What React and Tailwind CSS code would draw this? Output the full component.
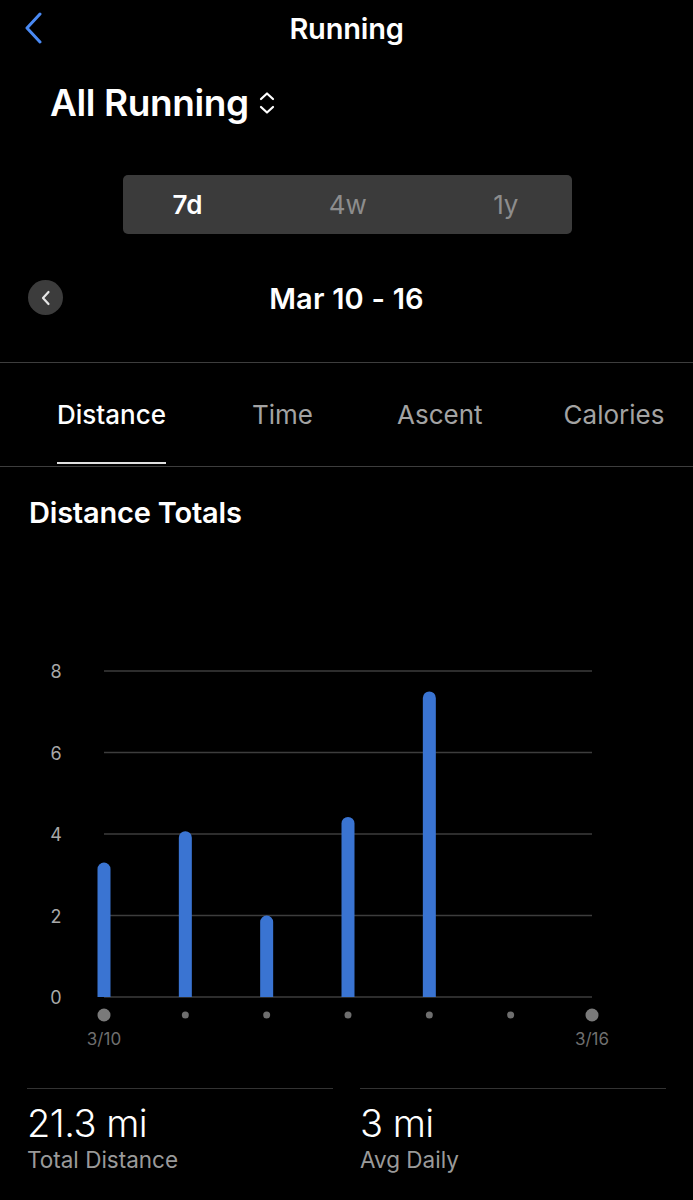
import React from "react";

const bars = [3.3, 4.07, 2.0, 4.42, 7.5, 0, 0];

function Chart() {
  const x0 = 104;
  const step = (592 - 104) / 6;
  const y0 = 358; // zero line inside svg (svg top = 640)
  const unit = 40.75;
  const grid = [0, 2, 4, 6, 8];
  return (
    <svg width="693" height="420" viewBox="0 0 693 420" className="block">
      {grid.map((g) => {
        const y = y0 - g * unit;
        return (
          <g key={g}>
            <line x1={x0} x2={592} y1={y} y2={y} stroke="#3d3d3d" strokeWidth="1.5" />
            <text x="56" y={y + 7} textAnchor="middle" fill="#a8a8a8" fontSize="18" fontFamily="Inter, 'Liberation Sans', sans-serif">
              {g}
            </text>
          </g>
        );
      })}
      {bars.map((v, i) => {
        const cx = x0 + i * step;
        const h = v * unit;
        return (
          <g key={i}>
            {v > 0 && (
              <path
                d={`M ${cx - 6.5} ${y0} L ${cx - 6.5} ${y0 - h + 6.5} A 6.5 6.5 0 0 1 ${cx + 6.5} ${y0 - h + 6.5} L ${cx + 6.5} ${y0} Z`}
                fill="#3a74d2"
              />
            )}
            <circle cx={cx} cy={376} r={i === 0 || i === 6 ? 6.5 : 3.5} fill={i === 0 || i === 6 ? "#7a7a7a" : "#6e6e6e"} />
          </g>
        );
      })}
      <text x={x0} y={406} textAnchor="middle" fill="#6f6f6f" fontSize="17" fontFamily="Inter, 'Liberation Sans', sans-serif">3/10</text>
      <text x={592} y={406} textAnchor="middle" fill="#6f6f6f" fontSize="17" fontFamily="Inter, 'Liberation Sans', sans-serif">3/16</text>
    </svg>
  );
}

export default function App() {
  return (
    <div className="w-[693px] h-[1200px] bg-black text-white overflow-hidden" style={{ fontFamily: "Inter, 'Liberation Sans', sans-serif" }}>
      {/* Header */}
      <div className="relative h-[58px] flex items-center justify-center">
        <svg className="absolute left-[23px] top-[12px]" width="22" height="32" viewBox="0 0 22 32">
          <path d="M17 2 L4 16 L17 30" fill="none" stroke="#4a8af4" strokeWidth="3" strokeLinecap="round" strokeLinejoin="round" />
        </svg>
        <div className="text-[29px] font-semibold tracking-[-0.2px]">Running</div>
      </div>

      {/* Title */}
      <div className="h-[92px] flex items-center pl-[50px] pb-[2px]">
        <div className="text-[37px] font-semibold tracking-[-0.4px]">All Running</div>
        <svg className="ml-[9px]" width="18" height="24" viewBox="0 0 18 24">
          <path d="M3 8 L9 2.5 L15 8" fill="none" stroke="white" strokeWidth="2.2" strokeLinecap="round" strokeLinejoin="round" />
          <path d="M3 16 L9 21.5 L15 16" fill="none" stroke="white" strokeWidth="2.2" strokeLinecap="round" strokeLinejoin="round" />
        </svg>
      </div>

      {/* Segmented */}
      <div className="pt-[25px] flex justify-center">
        <div className="w-[449px] h-[59px] ml-[1px] bg-[#3b3b3b] rounded-[5px] flex items-center justify-between pl-[50px] pr-[53px] text-[26px]">
          <span className="font-semibold text-white">7d</span>
          <span className="text-[#8d8d8d]">4w</span>
          <span className="text-[#8d8d8d]">1y</span>
        </div>
      </div>

      {/* Date row */}
      <div className="relative h-[128px] flex items-center justify-center pt-[1px]">
        <div className="absolute left-[28px] top-[46px] w-[35px] h-[35px] rounded-full bg-[#3c3c3c] flex items-center justify-center">
          <svg width="12" height="16" viewBox="0 0 12 16">
            <path d="M8.5 2 L3 8 L8.5 14" fill="none" stroke="#e5e5e5" strokeWidth="2.2" strokeLinecap="round" strokeLinejoin="round" />
          </svg>
        </div>
        <div className="text-[29px] font-semibold tracking-[0.2px]">Mar 10 - 16</div>
      </div>

      {/* Tabs */}
      <div className="border-t-[1.5px] border-b-[1.5px] border-[#3d3d3d] h-[105px] relative">
        <div className="flex items-center h-full text-[26px] pb-[1px]">
          <div className="ml-[57px] relative h-full flex items-center">
            <span className="font-medium text-white">Distance</span>
            <div className="absolute left-0 right-0 bottom-[1px] h-[2.5px] bg-[#e0e0e0]" />
          </div>
          <span className="ml-[86px] text-[#a3a3a3]">Time</span>
          <span className="ml-[84px] text-[#a3a3a3]">Ascent</span>
          <span className="ml-[81px] text-[#a3a3a3]">Calories</span>
        </div>
      </div>

      {/* Distance Totals */}
      <div className="h-[96px] flex items-center pl-[29px] pb-[4px]">
        <div className="text-[29px] font-semibold tracking-[-0.2px]">Distance Totals</div>
      </div>

      <div className="h-[76px]" />

      <Chart />

      {/* Stats */}
      <div className="grid grid-cols-2 gap-[27px] px-[27px] pt-[29px]">
        <div className="border-t-[1.5px] border-[#333]">
          <div className="text-[38px] font-light leading-none mt-[15px] tracking-[-0.5px]">21.3 mi</div>
          <div className="text-[22.5px] text-[#9a9a9a] mt-[1px]">Total Distance</div>
        </div>
        <div className="border-t-[1.5px] border-[#333]">
          <div className="text-[38px] font-light leading-none mt-[15px] tracking-[-0.5px]">3 mi</div>
          <div className="text-[22.5px] text-[#9a9a9a] mt-[1px]">Avg Daily</div>
        </div>
      </div>
    </div>
  );
}
